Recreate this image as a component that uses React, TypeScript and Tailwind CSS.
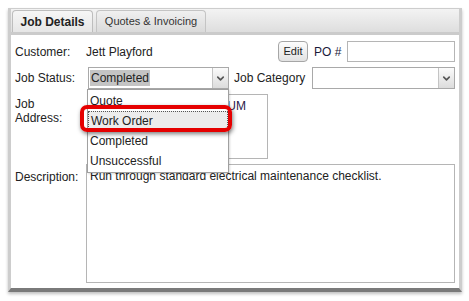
import { ChevronDown } from "lucide-react";

const font = { fontFamily: '"Liberation Sans", Arial, sans-serif' };

function SelectBox({ width, value, highlight }: { width: string; value?: string; highlight?: boolean }) {
  return (
    <div className={`${width} h-[22px] flex border border-[#a9a9a9] bg-white`}>
      <div className="flex-1 flex items-center pl-[1px] overflow-hidden">
        {value && (
          <span className={`px-[1px] leading-[16px] text-[12px] text-[#222] ${highlight ? "bg-[#c4c4c4]" : ""}`}>{value}</span>
        )}
      </div>
      <div className="w-[16px] flex items-center justify-center border-l border-[#c4c4c4] bg-gradient-to-b from-[#fbfbfb] to-[#dcdcdc]">
        <ChevronDown size={11} strokeWidth={3.5} className="text-[#555]" />
      </div>
    </div>
  );
}

export default function App() {
  return (
    <div className="w-[469px] h-[301px] bg-white pt-[8px] pl-[8px]" style={font}>
      <div className="relative w-[454px] h-[284px] flex flex-col border-x-[3px] border-t border-[#cdcdcd] border-b-[4px] border-b-[#7a7a7a] shadow-[0_2px_3px_rgba(0,0,0,0.25)] bg-white">
        {/* tab strip */}
        <div className="h-[26px] flex items-end gap-[3px] pl-[1px] bg-gradient-to-b from-[#f3f3f3] to-[#dedede] border-b-[3px] border-[#cbcbcb]">
          <div className="h-[22px] w-[81px] flex items-center justify-center rounded-t-[4px] border border-b-0 border-[#bdbdbd] bg-gradient-to-b from-[#f6f6f6] to-[#e6e6e6] text-[12px] font-bold text-[#222]">
            Job Details
          </div>
          <div className="h-[22px] w-[110px] flex items-center justify-center rounded-t-[4px] border border-b-0 border-[#c4c4c4] bg-gradient-to-b from-[#f0f0f0] to-[#dadada] text-[11px] text-[#333]">
            Quotes &amp; Invoicing
          </div>
        </div>

        {/* form */}
        <div className="flex-1 flex flex-col gap-[5px] pt-[6px] pl-[4px] pr-[4px] text-[12px] text-[#222]">
          <div className="h-[21px] flex items-center">
            <div className="w-[71px]">Customer:</div>
            <div className="flex-1">Jett Playford</div>
            <button className="w-[30px] h-[21px] rounded-[4px] border border-[#a6a6a6] bg-gradient-to-b from-[#fdfdfd] to-[#e2e2e2] text-[11px] text-[#222]">
              Edit
            </button>
            <div className="ml-[6px] w-[33px] text-[#1a1a3a]">PO #</div>
            <div className="w-[108px] h-[21px] border border-[#b5b5b5] bg-white" />
          </div>

          <div className="h-[22px] flex items-center">
            <div className="w-[73px]">Job Status:</div>
            <SelectBox width="w-[141px]" value="Completed" highlight />
            <div className="ml-[5px] w-[78px]">Job Category</div>
            <SelectBox width="w-[143px]" />
          </div>

          <div className="flex">
            <div className="w-[72px] leading-[14px] pt-[3px]">
              Job
              <br />
              Address:
            </div>
            <div className="w-[181px] h-[65px] border border-[#b5b5b5] bg-white pt-[2px] pl-[2px]">
              <div className="w-[156px] text-right whitespace-nowrap overflow-hidden text-[#2a1a4a]">12 Ferris Ave, GYMNASIUM</div>
            </div>
          </div>

          <div className="flex">
            <div className="w-[71px] pt-[4px]">Description:</div>
            <div className="w-[369px] h-[119px] border border-[#b5b5b5] bg-white pt-[2px] pl-[3px] text-[#222]">
              Run through standard electrical maintenance checklist.
            </div>
          </div>
        </div>

        {/* open dropdown list */}
        <div className="absolute left-[76px] top-[80px] w-[142px] flex flex-col py-[1px] border border-[#a0a0a0] bg-white text-[12px] text-[#222] shadow-[1px_1px_2px_rgba(0,0,0,0.15)]">
          <div className="h-[20px] flex items-center pl-[2px]">Quote</div>
          <div className="h-[20px] flex items-center pl-[2px] bg-[#ececec] border border-dotted border-[#555]">Work Order</div>
          <div className="h-[20px] flex items-center pl-[2px]">Completed</div>
          <div className="h-[20px] flex items-center pl-[2px]">Unsuccessful</div>
        </div>

        {/* red callout around Work Order */}
        <div className="absolute left-[69px] top-[96px] w-[152px] h-[27px] rounded-[7px] border-[4px] border-[#e50000] shadow-[1px_2px_4px_rgba(0,0,0,0.5)]" />
      </div>
    </div>
  );
}
